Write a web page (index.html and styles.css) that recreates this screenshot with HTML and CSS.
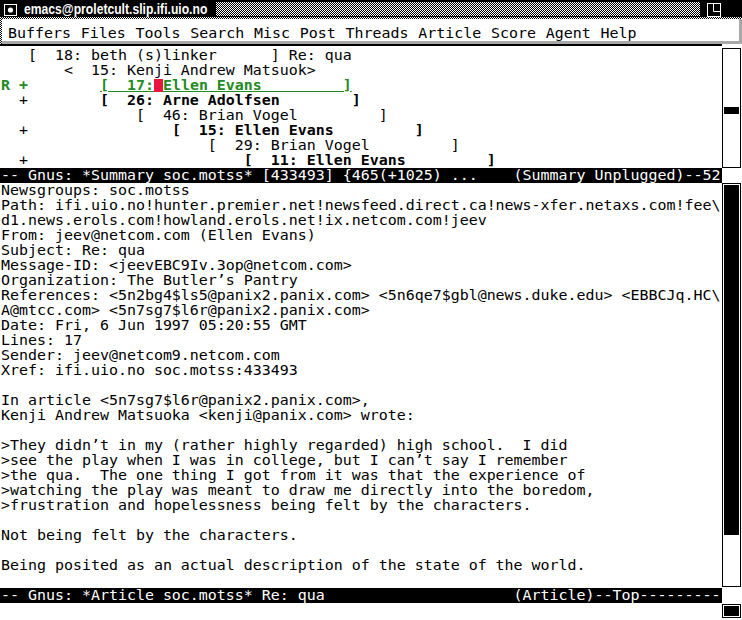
FILE: index.html
```html
<!DOCTYPE html>
<html>
<head>
<meta charset="utf-8">
<title>emacs@proletcult.slip.ifi.uio.no</title>
<link rel="stylesheet" href="styles.css">
</head>
<body>
<div class="frame">
  <header class="titlebar">
    <svg class="ticon" width="13" height="12" viewBox="0 0 13 12"><rect x="0.5" y="0.5" width="12" height="11" fill="none" stroke="#fff"/><circle cx="6.5" cy="6" r="2.6" fill="#fff"/></svg>
    <span class="title">emacs@proletcult.slip.ifi.uio.no</span>
    <div class="stipple"></div>
    <svg class="ticon2" width="14" height="14" viewBox="0 0 14 14"><rect x="0.5" y="0.5" width="13" height="13" fill="none" stroke="#fff"/><polyline points="6.5,0.5 6.5,8.5 13.5,8.5" fill="none" stroke="#fff"/></svg>
  </header>
  <nav class="menubar"><div class="menu">Buffers Files Tools Search Misc Post Threads Article Score Agent Help</div></nav>
  <div class="menurule"></div>
  <section class="win summary">
    <div class="text">
<div class="ln">   [  18: beth (s)linker      ] Re: qua</div>
<div class="ln">       &lt;  15: Kenji Andrew Matsuok&gt;</div>
<div class="ln g b"><span>R +        </span><span class="u">[  17:<span class="cursor"></span>Ellen Evans         ]</span></div>
<div class="ln">  +        <span class="b">[  26: Arne Adolfsen        ]</span></div>
<div class="ln">               [  46: Brian Vogel         ]</div>
<div class="ln">  +                <span class="b">[  15: Ellen Evans         ]</span></div>
<div class="ln">                       [  29: Brian Vogel         ]</div>
<div class="ln">  +                        <span class="b">[  11: Ellen Evans         ]</span></div>
    </div>
    <div class="sbar"><div class="sthumb"></div></div>
  </section>
  <div class="modeline">-- Gnus: *Summary soc.motss* [433493] {465(+1025) ...    (Summary Unplugged)--52</div>
  <section class="win article">
    <div class="text">
<div class="ln">Newsgroups: soc.motss</div>
<div class="ln">Path: ifi.uio.no!hunter.premier.net!newsfeed.direct.ca!news-xfer.netaxs.com!fee\</div>
<div class="ln">d1.news.erols.com!howland.erols.net!ix.netcom.com!jeev</div>
<div class="ln">From: jeev@netcom.com (Ellen Evans)</div>
<div class="ln">Subject: Re: qua</div>
<div class="ln">Message-ID: &lt;jeevEBC9Iv.3op@netcom.com&gt;</div>
<div class="ln">Organization: The Butler’s Pantry</div>
<div class="ln">References: &lt;5n2bg4$ls5@panix2.panix.com&gt; &lt;5n6qe7$gbl@news.duke.edu&gt; &lt;EBBCJq.HC\</div>
<div class="ln">A@mtcc.com&gt; &lt;5n7sg7$l6r@panix2.panix.com&gt;</div>
<div class="ln">Date: Fri, 6 Jun 1997 05:20:55 GMT</div>
<div class="ln">Lines: 17</div>
<div class="ln">Sender: jeev@netcom9.netcom.com</div>
<div class="ln">Xref: ifi.uio.no soc.motss:433493</div>
<div class="ln"> </div>
<div class="ln">In article &lt;5n7sg7$l6r@panix2.panix.com&gt;,</div>
<div class="ln">Kenji Andrew Matsuoka &lt;kenji@panix.com&gt; wrote:</div>
<div class="ln"> </div>
<div class="ln">&gt;They didn’t in my (rather highly regarded) high school.  I did</div>
<div class="ln">&gt;see the play when I was in college, but I can’t say I remember</div>
<div class="ln">&gt;the qua.  The one thing I got from it was that the experience of</div>
<div class="ln">&gt;watching the play was meant to draw me directly into the boredom,</div>
<div class="ln">&gt;frustration and hopelessness being felt by the characters.</div>
<div class="ln"> </div>
<div class="ln">Not being felt by the characters.</div>
<div class="ln"> </div>
<div class="ln">Being posited as an actual description of the state of the world.</div>
<div class="ln"> </div>
    </div>
    <div class="sbar"><div class="athumb"></div></div>
  </section>
  <div class="modeline">-- Gnus: *Article soc.motss* Re: qua                     (Article)--Top---------</div>
  <div class="minibuf"><div class="text"></div><div class="mbox"><div class="mfill"></div></div></div>
</div>
</body>
</html>
```
FILE: styles.css
```css
* { box-sizing: border-box; margin: 0; padding: 0; }
html, body { width: 742px; height: 620px; background: #fff; overflow: hidden; }
body {
  font-family: "DejaVu Sans Mono", "Liberation Mono", monospace;
  font-size: 14.95px;
  line-height: 15px;
  color: #000;
}
.frame { display: flex; flex-direction: column; width: 742px; }

.titlebar { height: 17px; background: #000; display: flex; align-items: flex-start; }
.ticon { margin: 4px 0 0 4px; flex-shrink: 0; }
.title {
  flex-shrink: 0;
  width: 192px;
  margin-left: 7px;
  font-family: "Liberation Sans", Arial, sans-serif;
  font-weight: bold;
  font-size: 15px;
  line-height: 17px;
  color: #fff;
  white-space: nowrap;
  transform: scaleX(0.81);
  transform-origin: left center;
}
.stipple, .menubar {
  background-image: repeating-conic-gradient(#000 0% 25%, #fff 0% 50%);
  background-size: 2px 2px;
}
.stipple { width: 484px; height: 14px; margin-top: 2px; flex-shrink: 0; }
.ticon2 { margin: 3px 0 0 7px; flex-shrink: 0; }

.menubar { padding: 2px 0 0 2px; }
.menu {
  height: 25px;
  background: #fff;
  border-right: 3px solid #a8a8a8;
  border-bottom: 3px solid #a8a8a8;
  padding: 6px 0 0 6px;
  line-height: 16px;
  word-spacing: 0.8px;
  white-space: pre;
}
.menurule { width: 722px; height: 2px; background: #000; margin-bottom: 2px; }

.win { display: flex; }
.text { width: 722px; flex-shrink: 0; padding-left: 1px; overflow: hidden; }
.ln { height: 15px; white-space: pre; }
.summary { height: 120px; }
.article { height: 405px; }

.b { font-weight: bold; }
.g { color: #228b22; }
.u { text-decoration: underline; text-decoration-thickness: 1px; text-underline-offset: 1px; }
.cursor {
  display: inline-block;
  width: 9px;
  height: 13px;
  background: #e8173f;
  vertical-align: -2px;
}

.sbar { width: 19px; border: 1px solid #000; flex-shrink: 0; }
.summary .sbar { height: 120px; }
.article .sbar { height: 404px; }
.sthumb { margin: 58px 1px 0; height: 7px; background: #000; }
.athumb { margin: 1px; height: 350px; background: #000; }

.modeline {
  width: 722px;
  height: 15px;
  background: #000;
  color: #fff;
  padding-left: 1px;
  white-space: pre;
}
.minibuf { display: flex; height: 15px; }
.mbox { width: 19px; height: 14px; margin-top: 1px; border: 1px solid #000; padding: 1px; }
.mfill { height: 100%; background: #000; }
```
